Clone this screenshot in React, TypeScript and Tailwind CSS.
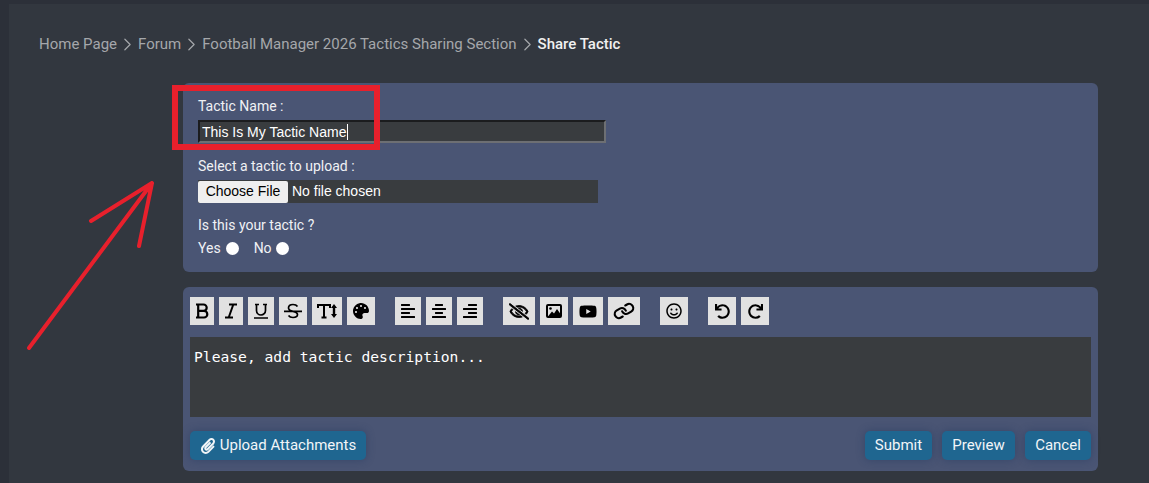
import { FaPalette, FaAlignLeft, FaAlignCenter, FaAlignRight, FaRegEyeSlash, FaYoutube, FaRegSmile, FaUndo, FaRedo, FaPaperclip } from 'react-icons/fa';
import { ChevronRight, Link } from 'lucide-react';

const toolClass = 'flex h-[28px] items-center justify-center bg-[#e1e1e1] text-black';

function Crumb({ label, last }: { label: string; last?: boolean }) {
  return (
    <>
      <span className={last ? 'font-medium text-[#f0f0f0]' : 'text-[#a5a7ab]'}>{label}</span>
      {!last && <ChevronRight className="h-[21px] w-[21px] text-[#a5a7ab]" strokeWidth={1.4} />}
    </>
  );
}

function BlueButton({ children, className }: { children: React.ReactNode; className: string }) {
  return (
    <button className={`flex h-[29px] items-center justify-center rounded-[5px] bg-[#1f6690] text-[15px] text-[#f2f5f8] shadow-[0_0_8px_rgba(30,50,90,0.45)] ${className}`}>
      {children}
    </button>
  );
}

function StrokeIcon({ d, w = 16, sw = 1.8 }: { d: string; w?: number; sw?: number }) {
  return (
    <svg width={w} height={16} viewBox={`0 0 ${w} 16`} fill="none" stroke="currentColor" strokeWidth={sw}>
      <path d={d} />
    </svg>
  );
}

export default function App() {
  return (
    <div className="h-[483px] w-[1149px] overflow-hidden bg-[#2c3039] pl-[9px] pt-[4px] font-['Roboto',sans-serif]">
      <div className="relative h-[479px] w-[1140px] bg-[#32373f] pl-[30px] pt-[30px]">
        <div className="flex h-[20px] items-center text-[15px]">
          <Crumb label="Home Page" />
          <Crumb label="Forum" />
          <Crumb label="Football Manager 2026 Tactics Sharing Section" />
          <Crumb label="Share Tactic" last />
        </div>

        <div className="ml-[144px] mt-[29px] h-[189px] w-[915px] rounded-[6px] bg-[#4a5574] pl-[15px] pt-[15px] text-[14px] text-[#f0f1f4]">
          <div className="h-[17px] leading-[17px]">Tactic Name :</div>
          <div className="relative mt-[5px] h-[23px] w-[408px]">
            <input
              readOnly
              value="This Is My Tactic Name"
              className="h-full w-full border-2 border-t-[#1b1c1e] border-r-[#6d6f73] border-b-[#6d6f73] border-l-[#1b1c1e] bg-[#393c3f] px-[2px] font-['Liberation_Sans',sans-serif] text-[14px] text-white outline-none"
            />
            <span className="absolute left-[149px] top-[4px] h-[16px] w-px bg-white" />
          </div>
          <div className="mt-[15px] h-[17px] leading-[17px]">Select a tactic to upload :</div>
          <div className="mt-[5px] flex h-[23px] w-[400px] items-center bg-[#393c3f] font-['Liberation_Sans',sans-serif]">
            <button className="h-[22px] w-[90px] rounded-[2px] bg-[#efefef] text-[14px] text-black">Choose File</button>
            <span className="ml-[4px] text-white">No file chosen</span>
          </div>
          <div className="mt-[14px] h-[17px] leading-[17px]">Is this your tactic ?</div>
          <div className="mt-[6px] flex h-[17px] items-center leading-[17px]">
            <span>Yes</span>
            <span className="ml-[5px] h-[13px] w-[13px] rounded-full bg-white" />
            <span className="ml-[15px]">No</span>
            <span className="ml-[4px] h-[13px] w-[13px] rounded-full bg-white" />
          </div>
        </div>

        <div className="ml-[144px] mt-[15px] h-[184px] w-[915px] rounded-[6px] bg-[#4a5574] px-[7px] pt-[10px]">
          <div className="flex h-[28px] items-center text-[16px]">
            <div className="flex gap-[5px]">
              <button className={`${toolClass} w-[24px]`}><StrokeIcon w={14} sw={2.2} d="M1 1.5H8.5a3.2 3.2 0 0 1 0 6.4H3.2M3.2 1.5V14.5M1 14.5H9a3.3 3.3 0 0 0 0-6.6" /></button>
              <button className={`${toolClass} w-[24px]`}><StrokeIcon w={14} sw={2} d="M5 1.5H13M1 14.5H9M9.3 1.5L4.7 14.5" /></button>
              <button className={`${toolClass} w-[26px]`}><StrokeIcon sw={1.7} d="M2 1.5H6M10 1.5H14M3.5 1.5V7.5a4.5 4.5 0 0 0 9 0V1.5M1 15H15" /></button>
              <button className={`${toolClass} w-[28px]`}><StrokeIcon w={18} sw={1.7} d="M13.5 3.5C12.5 2 11 1.5 9 1.5C6.5 1.5 4.5 2.7 4.5 5C4.5 7 6.5 7.7 9 8.3C11.5 8.9 13.5 9.7 13.5 11.6C13.5 13.5 11.5 14.5 9 14.5C7 14.5 5.5 14 4.5 12.5M0 8.3H18" /></button>
              <button className={`${toolClass} w-[30px]`}>
                <svg width="20" height="16" viewBox="0 0 20 16" fill="none" stroke="currentColor" strokeWidth="2">
                  <path d="M1 5V2H13V5M7 2V14M4.5 14.5H9.5" />
                  <path d="M17 3V13" strokeWidth="2.4" />
                  <path d="M14 5L17 1L20 5ZM14 11L17 15L20 11Z" fill="currentColor" stroke="none" />
                </svg>
              </button>
              <button className={`${toolClass} w-[28px]`}><FaPalette /></button>
            </div>
            <div className="ml-[20px] flex gap-[5px]">
              <button className={`${toolClass} w-[26px]`}><FaAlignLeft /></button>
              <button className={`${toolClass} w-[26px]`}><FaAlignCenter /></button>
              <button className={`${toolClass} w-[26px]`}><FaAlignRight /></button>
            </div>
            <div className="ml-[20px] flex gap-[5px]">
              <button className={`${toolClass} w-[32px]`}><FaRegEyeSlash className="h-[17px] w-[20px]" strokeWidth={25} /></button>
              <button className={`${toolClass} w-[28px]`}>
                <svg width="16" height="14" viewBox="0 0 16 14" fill="none" stroke="currentColor" strokeWidth="2">
                  <rect x="1" y="1" width="14" height="12" rx="1" />
                  <circle cx="4.5" cy="4.5" r="1.3" fill="currentColor" stroke="none" />
                  <path d="M1.5 13L6 7.5L8 9.5L11 5L14.5 10V13Z" fill="currentColor" stroke="none" />
                </svg>
              </button>
              <button className={`${toolClass} w-[30px]`}><FaYoutube className="h-[17px] w-[18px]" /></button>
              <button className={`${toolClass} w-[32px]`}><Link className="h-[20px] w-[20px] rotate-[15deg]" strokeWidth={2.6} /></button>
            </div>
            <button className={`${toolClass} ml-[20px] w-[28px]`}><FaRegSmile /></button>
            <div className="ml-[20px] flex gap-[5px]">
              <button className={`${toolClass} w-[28px]`}><FaUndo className="h-[15px] w-[15px]" /></button>
              <button className={`${toolClass} w-[28px]`}><FaRedo className="h-[15px] w-[15px]" /></button>
            </div>
          </div>
          <div className="mt-[12px] h-[80px] w-[901px] bg-[#393c3f] px-[4px] py-[11px] font-['DejaVu_Sans_Mono',monospace] text-[14.65px] leading-[18px] text-white">
            Please, add tactic description...
          </div>
          <div className="mt-[14px] flex items-center justify-between">
            <BlueButton className="w-[176px] gap-[4px]">
              <FaPaperclip className="h-[16px] w-[16px]" />
              Upload Attachments
            </BlueButton>
            <div className="flex gap-[10px]">
              <BlueButton className="w-[67px]">Submit</BlueButton>
              <BlueButton className="w-[73px]">Preview</BlueButton>
              <BlueButton className="w-[66px]">Cancel</BlueButton>
            </div>
          </div>
        </div>

        <svg className="pointer-events-none absolute left-[-9px] top-[-4px]" width="1149" height="483" fill="none" stroke="#e8202c">
          <rect x="175" y="88" width="202" height="59" strokeWidth="6" />
          <path d="M29 348 L152 183 M91 221 L152 183 L139 246" strokeWidth="4" strokeLinecap="round" strokeLinejoin="round" />
        </svg>
      </div>
    </div>
  );
}
